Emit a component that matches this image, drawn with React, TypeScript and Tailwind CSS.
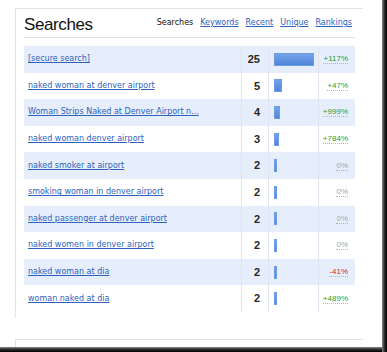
import React from "react";

type Row = {
  query: string;
  count: number;
  change: string;
  tone: "up" | "flat" | "down";
};

const rows: Row[] = [
  { query: "[secure search]", count: 25, change: "+117%", tone: "up" },
  { query: "naked woman at denver airport", count: 5, change: "+47%", tone: "up" },
  { query: "Woman Strips Naked at Denver Airport n...", count: 4, change: "+999%", tone: "up" },
  { query: "naked woman denver airport", count: 3, change: "+784%", tone: "up" },
  { query: "naked smoker at airport", count: 2, change: "0%", tone: "flat" },
  { query: "smoking woman in denver airport", count: 2, change: "0%", tone: "flat" },
  { query: "naked passenger at denver airport", count: 2, change: "0%", tone: "flat" },
  { query: "naked women in denver airport", count: 2, change: "0%", tone: "flat" },
  { query: "naked woman at dia", count: 2, change: "-41%", tone: "down" },
  { query: "woman naked at dia", count: 2, change: "+489%", tone: "up" },
];

const maxCount = 25;
const maxBar = 40;

const toneClass = {
  up: "text-[#2a9e2a]",
  flat: "text-[#a6a6a6]",
  down: "text-[#d22828]",
};

const small = { fontFamily: '"DejaVu Sans", Verdana, sans-serif' };
const sans = { fontFamily: '"Liberation Sans", Arial, sans-serif' };

function Nav() {
  const links = ["Keywords", "Recent", "Unique", "Rankings"];
  return (
    <div className="flex items-center gap-[7px] text-[8px] pr-[3px]" style={small}>
      <span className="text-[#111]">Searches</span>
      {links.map((l) => (
        <a key={l} href="#" className="text-[#2c62bd] underline">
          {l}
        </a>
      ))}
    </div>
  );
}

function SearchRow({ row, index }: { row: Row; index: number }) {
  const barWidth = Math.max(3, Math.round((row.count / maxCount) * maxBar));
  return (
    <div
      className={`flex h-[26.6px] items-stretch ${
        index % 2 === 0 ? "bg-[#e6eefc]" : "bg-white"
      }`}
    >
      <div className="w-[217px] flex items-center pl-[4px] text-[8px]" style={small}>
        <a href="#" className="text-[#2c62bd] underline whitespace-nowrap">
          {row.query}
        </a>
      </div>
      <div
        className="w-[27px] flex items-center justify-end pr-[8px] border-l border-[#e1e4f0] text-[11px] font-bold text-[#262626]"
        style={sans}
      >
        {row.count}
      </div>
      <div className="w-[50px] flex items-center pl-[5px] border-l border-[#e1e4f0]">
        <div
          className="h-[13px] bg-gradient-to-b from-[#74a2ea] to-[#4f85d9] border border-[#6d9be4]"
          style={{ width: barWidth }}
        />
      </div>
      <div
        className="flex-1 flex items-center justify-end pr-[7px] border-l border-[#e1e4f0] text-[8px]"
        style={sans}
      >
        <span className={`${toneClass[row.tone]} border-b border-dotted border-[#b5b5b5] leading-[9px]`}>
          {row.change}
        </span>
      </div>
    </div>
  );
}

export default function App() {
  return (
    <div className="w-[387px] h-[352px] bg-white flex overflow-hidden">
      <div className="flex-1 flex flex-col">
        <div className="flex-1 flex flex-col pt-[8px] pl-[15px]">
          <div className="w-[348px] h-[310px] border-t border-l border-[#e3e3e3] px-[8px]">
            <div className="h-[29px] flex items-center justify-between border-b border-[#e2e2e2]">
              <h1 className="text-[17px] tracking-[-0.4px] text-[#111] leading-none pt-[2px]" style={sans}>
                Searches
              </h1>
              <Nav />
            </div>
            <div className="mt-[8px]">
              {rows.map((r, i) => (
                <SearchRow key={i} row={r} index={i} />
              ))}
            </div>
          </div>
          <div className="mt-[21px] w-[348px] flex-1 border-t border-l border-[#e3e3e3]" />
        </div>
        <div className="h-[5px] bg-gradient-to-b from-[#8a8a8a] via-[#2a2a2a] to-[#050505]" />
      </div>
      <div className="w-[5px] bg-gradient-to-r from-[#8a8a8a] via-[#2a2a2a] to-[#050505]" />
    </div>
  );
}
